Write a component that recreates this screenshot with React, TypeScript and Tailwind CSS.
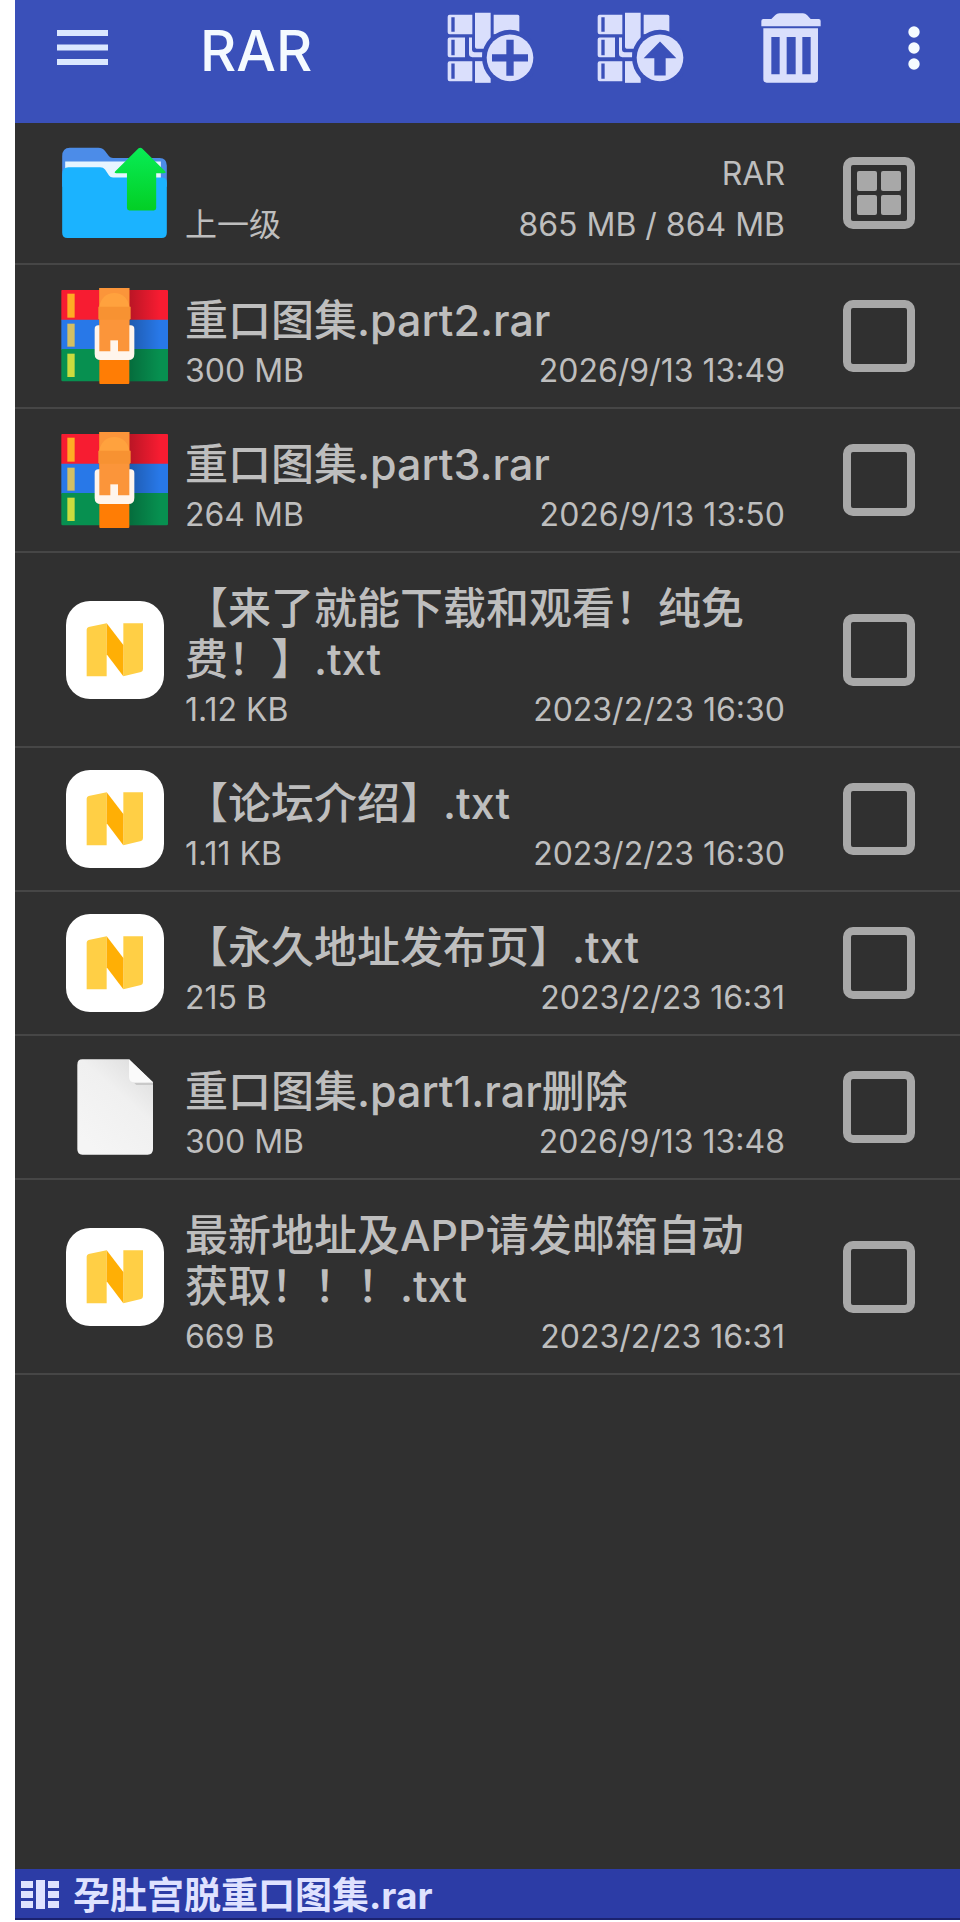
import React from 'react';

type IconKind = 'rar' | 'note' | 'file';

interface FileEntry {
    name: string;
    size: string;
    date: string;
    icon: IconKind;
}

const files: FileEntry[] = [
    { name: '重口图集.part2.rar', size: '300 MB', date: '2026/9/13 13:49', icon: 'rar' },
    { name: '重口图集.part3.rar', size: '264 MB', date: '2026/9/13 13:50', icon: 'rar' },
    { name: '【来了就能下载和观看！纯免费！】.txt', size: '1.12 KB', date: '2023/2/23 16:30', icon: 'note' },
    { name: '【论坛介绍】.txt', size: '1.11 KB', date: '2023/2/23 16:30', icon: 'note' },
    { name: '【永久地址发布页】.txt', size: '215 B', date: '2023/2/23 16:31', icon: 'note' },
    { name: '重口图集.part1.rar删除', size: '300 MB', date: '2026/9/13 13:48', icon: 'file' },
    { name: '最新地址及APP请发邮箱自动获取！！！.txt', size: '669 B', date: '2023/2/23 16:31', icon: 'note' },
];

const MenuIcon = () => (
    <svg viewBox="0 0 52 36" className="w-[52px] h-9" fill="#dbe8ff">
        <rect y="0" width="51" height="6" />
        <rect y="14.5" width="51" height="6" />
        <rect y="29" width="51" height="6" />
    </svg>
);

// Stack of books with a round badge; the badge symbol comes in as children
const ArchiveIcon: React.FC<{ children: React.ReactNode }> = ({ children }) => (
    <svg viewBox="0 0 261 212" className="w-[87px] h-[71px]" fill="#dadffc">
        <path fillRule="evenodd" d="M8 8H76V66H8Q2 66 2 60V14Q2 8 8 8ZM13 15V59H23V15Z" />
        <path fillRule="evenodd" d="M8 76H54V135H8Q2 135 2 129V82Q2 76 8 76ZM13 83V129H23V83Z" />
        <path fillRule="evenodd" d="M8 147H76V207H8Q2 207 2 201V153Q2 147 8 147ZM13 154V200H23V154Z" />
        <path d="M66 76H75V113Q75 120 82 120H106V135H76Q66 135 66 125Z" />
        <path d="M84 2H131V110H92Q84 110 84 102Z" />
        <path d="M140 8H212Q217 8 217 13V66H140Z" />
        <path d="M84 147H131V212H84Z" />
        <circle cx="189" cy="137" r="84" fill="#3a50b9" />
        <circle cx="189" cy="137" r="70" />
        {children}
    </svg>
);

const TrashIcon = () => (
    <svg viewBox="0 0 180 210" className="w-15 h-[70px]" fill="#dadffc">
        <path d="M1 24Q1 18 7 18H31L43 6Q48 1 55 1H126Q133 1 138 6L149 18H173Q179 18 179 24V40H1Z" />
        <path fillRule="evenodd" d="M7 46H171V199Q171 209 161 209H17Q7 209 7 199ZM31 72V184H56V72ZM77 72V184H104V72ZM124 72V184H149V72Z" />
    </svg>
);

const MoreIcon = () => (
    <svg viewBox="0 0 12 46" className="w-3 h-[46px]" fill="#f4fbff">
        <circle cx="6" cy="7" r="5.7" />
        <circle cx="6" cy="23" r="5.7" />
        <circle cx="6" cy="39" r="5.7" />
    </svg>
);

const FolderUpIcon = () => (
    <svg viewBox="0 0 321 280" className="w-[107px] h-[93px]">
        <defs>
            <linearGradient id="folder-up-arrow" x1="0" y1="0" x2="0" y2="1">
                <stop offset="0" stopColor="#08ec55" />
                <stop offset="1" stopColor="#03cf25" />
            </linearGradient>
        </defs>
        <path d="M3 28Q3 2 26 2H112Q124 2 132 12L144 28Q148 33 156 33H296Q318 34 318 56V120H3Z" fill="#4c8ce8" />
        <path d="M12 44H300V110H12Z" fill="#e6f5ff" />
        <path d="M3 82Q3 61 22 61H117Q127 61 132 68L144 86Q148 92 156 92H302Q318 92 318 106V258Q318 274 302 274H19Q3 274 3 258Z" fill="#1bb3ff" />
        <path d="M233 4Q238 0 243 4L313 73Q317 79 309 79H286V184Q286 191 279 191H205Q198 191 198 184V79H166Q158 79 163 73Z" fill="url(#folder-up-arrow)" />
    </svg>
);

const RarIcon = () => (
    <svg viewBox="0 0 321 288" className="w-[107px] h-24">
        <defs>
            <linearGradient id="rar-shade" x1="0" y1="0" x2="1" y2="0">
                <stop offset="0" stopColor="#000" stopOpacity="0.26" />
                <stop offset="0.8" stopColor="#000" stopOpacity="0" />
            </linearGradient>
        </defs>
        <path d="M1 8Q1 6 4 6H318Q321 6 321 9V97H1Z" fill="#f71c31" />
        <path d="M1 95H321V185H1Z" fill="#2878e8" />
        <path d="M1 183H321V276Q321 280 317 280H5Q1 280 1 276Z" fill="#079050" />
        <path d="M200 6H321V280H200Z" fill="url(#rar-shade)" />
        <path d="M19 17H41V89H19Z" fill="#ffab24" />
        <path d="M19 107H41V176H19Z" fill="#d3bf63" />
        <path d="M19 197H41V267H19Z" fill="#cbdb3e" />
        <path d="M115 0H205V285Q205 288 202 288H118Q115 288 115 285Z" fill="#ff7d05" />
        <path d="M112 112H209Q220 112 220 123V198Q220 216 202 216H119Q101 216 101 198V123Q101 112 112 112Z" fill="#fff5ec" />
        <path d="M115 0H205V190H115Z" fill="#fb953a" />
        <path d="M115 56Q122 17 160 15Q198 17 205 56V88H115Z" fill="#ffa23e" />
        <path d="M112 56H209V91Q209 95 205 95H116Q112 95 112 91Z" fill="#f79232" />
        <path d="M148 157H171V193H148Z" fill="#fff5ec" />
    </svg>
);

const NoteIcon = () => (
    <svg viewBox="0 0 294 294" className="w-[98px] h-[98px]">
        <rect width="294" height="294" rx="72" fill="#fff" />
        <path d="M62 86Q62 80 68 78L122 67V226H62Z" fill="#ffcf45" />
        <path d="M172 67H231V204Q231 211 225 213L172 226Z" fill="#ffcf45" />
        <path d="M122 67L172 132V226L122 160Z" fill="#ffaf05" />
    </svg>
);

const BlankFileIcon = () => (
    <svg viewBox="0 0 228 288" className="w-[76px] h-24">
        <defs>
            <linearGradient id="blank-file" x1="1" y1="0" x2="0.3" y2="1">
                <stop offset="0" stopColor="#d9d9d9" />
                <stop offset="0.45" stopColor="#f0f0f0" />
                <stop offset="1" stopColor="#f5f5f5" />
            </linearGradient>
        </defs>
        <path d="M16 1H156L228 70V270Q228 287 212 287H16Q1 287 1 270V17Q1 1 16 1Z" fill="url(#blank-file)" />
        <path d="M172 72H228V78H178Z" fill="#c9c9c9" />
        <path d="M156 1L228 70H172Q156 70 156 54Z" fill="#fafafa" />
    </svg>
);

const VolumesIcon = () => (
    <svg viewBox="0 0 38 29" className="w-[38px] h-[29px]" fill="#dfe2ff">
        <path d="M0 1H12V8H0ZM0 11H12V18H0ZM0 21H12V28H0ZM15 0H24V29H15ZM27 1H38V8H27ZM27 11H38V18H27ZM27 21H38V28H27Z" />
    </svg>
);

const icons: Record<IconKind, React.ReactNode> = {
    rar: <RarIcon />,
    note: <NoteIcon />,
    file: <BlankFileIcon />,
};

const FileRow: React.FC<{ file: FileEntry }> = ({ file }) => (
    <li className="flex items-center border-b-2 border-[#464646] pl-[46px] pr-[45px]">
        <div className="flex w-[107px] shrink-0 justify-center">{icons[file.icon]}</div>
        <div className="ml-[17px] min-w-0 flex-1 pt-[30px] pb-[11px]">
            <h2 className="text-[43px] leading-[51px] font-medium [text-spacing-trim:space-all]">{file.name}</h2>
            <div className="flex justify-between text-[32px] leading-[50px]">
                <span>{file.size}</span>
                <span>{file.date}</span>
            </div>
        </div>
        <input
            type="checkbox"
            aria-label={file.name}
            className="ml-[58px] size-[72px] shrink-0 appearance-none rounded-[10px] border-8 border-[#a8a8a8] checked:bg-[#a8a8a8]"
        />
    </li>
);

export default function App() {
    return (
        <div className="min-h-screen bg-white pl-[15px] pb-0.5 flex flex-col font-['Inter','Noto_Sans_CJK_SC',sans-serif]">
            <div className="flex flex-1 flex-col bg-[#303030] text-[#bebebe]">
                <header className="flex items-center bg-[#3a50b9] pt-3 pb-10 pl-[42px] pr-10">
                    <button aria-label="菜单"><MenuIcon /></button>
                    <h1 className="ml-[91px] pt-2 text-[56px] leading-[63px] font-medium text-[#f4faff]">RAR</h1>
                    <div className="ml-auto flex items-center">
                        <button aria-label="添加到压缩文件">
                            <ArchiveIcon>
                                <path d="M178 83H200V126H243V148H200V191H178V148H135V126H178Z" fill="#3a50b9" />
                            </ArchiveIcon>
                        </button>
                        <button aria-label="解压文件" className="ml-[63px]">
                            <ArchiveIcon>
                                <path d="M189 88L238 138H206V190H172V138H140Z" fill="#3a50b9" />
                            </ArchiveIcon>
                        </button>
                        <button aria-label="删除" className="ml-[77px]"><TrashIcon /></button>
                        <button aria-label="更多" className="ml-[87px]"><MoreIcon /></button>
                    </div>
                </header>

                <main className="flex-1">
                    <div className="flex items-center border-b-2 border-[#464646] pl-[46px] pr-[45px]">
                        <FolderUpIcon />
                        <div className="ml-[17px] flex flex-1 items-end justify-between pt-[25px] pb-[13px] text-[32px] leading-[51px]">
                            <a href="#up">上一级</a>
                            <div className="text-right">
                                <p>RAR</p>
                                <p>865 MB / 864 MB</p>
                            </div>
                        </div>
                        <button
                            aria-label="全选"
                            className="ml-[58px] grid size-[72px] shrink-0 grid-cols-2 place-content-center justify-items-center gap-1 rounded-[10px] border-8 border-[#a8a8a8] p-1.5"
                        >
                            <span className="size-5 rounded-xs bg-[#a8a8a8]" />
                            <span className="size-5 rounded-xs bg-[#a8a8a8]" />
                            <span className="size-5 rounded-xs bg-[#a8a8a8]" />
                            <span className="size-5 rounded-xs bg-[#a8a8a8]" />
                        </button>
                    </div>
                    <ul>
                        {files.map((file) => (
                            <FileRow key={file.name} file={file} />
                        ))}
                    </ul>
                </main>

                <footer className="flex items-center gap-3.5 border-b-2 border-[#1b2270] bg-[#2c3ca6] pl-1.5 pt-0.5 text-[37px] leading-[47px] font-bold text-[#dfe2ff]">
                    <VolumesIcon />
                    <span className="pt-0.5 leading-[45px]">孕肚宫脱重口图集.rar</span>
                </footer>
            </div>
        </div>
    );
}
